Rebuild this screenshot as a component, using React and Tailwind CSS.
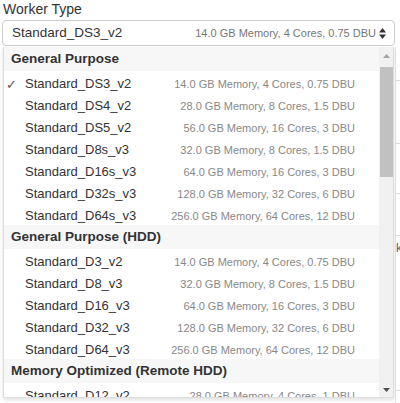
import { Fragment } from 'react'

const groups = [
  {
    name: 'General Purpose',
    items: [
      ['Standard_DS3_v2', '14.0 GB Memory, 4 Cores, 0.75 DBU', true],
      ['Standard_DS4_v2', '28.0 GB Memory, 8 Cores, 1.5 DBU'],
      ['Standard_DS5_v2', '56.0 GB Memory, 16 Cores, 3 DBU'],
      ['Standard_D8s_v3', '32.0 GB Memory, 8 Cores, 1.5 DBU'],
      ['Standard_D16s_v3', '64.0 GB Memory, 16 Cores, 3 DBU'],
      ['Standard_D32s_v3', '128.0 GB Memory, 32 Cores, 6 DBU'],
      ['Standard_D64s_v3', '256.0 GB Memory, 64 Cores, 12 DBU'],
    ],
  },
  {
    name: 'General Purpose (HDD)',
    items: [
      ['Standard_D3_v2', '14.0 GB Memory, 4 Cores, 0.75 DBU'],
      ['Standard_D8_v3', '32.0 GB Memory, 8 Cores, 1.5 DBU'],
      ['Standard_D16_v3', '64.0 GB Memory, 16 Cores, 3 DBU'],
      ['Standard_D32_v3', '128.0 GB Memory, 32 Cores, 6 DBU'],
      ['Standard_D64_v3', '256.0 GB Memory, 64 Cores, 12 DBU'],
    ],
  },
  {
    name: 'Memory Optimized (Remote HDD)',
    items: [['Standard_D12_v2', '28.0 GB Memory, 4 Cores, 1 DBU']],
  },
]

function SortIcon() {
  return (
    <svg width="7" height="11" viewBox="0 0 7 11" className="ml-[3px]">
      <path d="M3.5 0 L7 4.5 L0 4.5 Z" fill="#333" />
      <path d="M3.5 11 L7 6.5 L0 6.5 Z" fill="#333" />
    </svg>
  )
}

export default function App() {
  return (
    <div className="relative w-[400px] h-[403px] overflow-hidden bg-white font-['Liberation_Sans',Arial,sans-serif] text-[#333]">
      {/* page content peeking out behind the dropdown */}
      <div className="absolute left-[395px] top-[47px] w-[5px] h-[356px] border-l border-[#e6e6e6]" />
      <div className="absolute left-[395px] top-[80px] w-[5px] border-t border-[#ddd]" />
      <div className="absolute left-[395px] top-[143px] w-[5px] border-t border-[#ddd]" />
      <div className="absolute left-[395px] top-[193px] w-[5px] border-t border-[#ddd]" />
      <div className="absolute left-[395px] top-[235px] w-[5px] border-t border-[#ddd]" />
      <div className="absolute left-[395px] top-[390px] w-[5px] border-t border-[#ddd]" />
      <div className="absolute left-[396px] top-[242px] text-[12px] leading-none text-[#666]">k</div>

      <div className="px-[3px] pt-[1px]">
        <div className="text-[14px] leading-[17px] text-[#333]">Worker Type</div>
        <div className="mt-[2px] h-[26px] w-[393px] -ml-[1px] rounded-[4px] border border-[#ccc] flex items-center pl-[9px] pr-[8px]">
          <span className="text-[13.5px] text-[#333]">Standard_DS3_v2</span>
          <span className="ml-auto text-[11px] text-[#777]">14.0 GB Memory, 4 Cores, 0.75 DBU</span>
          <SortIcon />
        </div>
      </div>

      <div className="absolute left-[3px] top-[47px] w-[391px] h-[351px] flex bg-white border border-[#ddd] border-t-0 shadow-[0_2px_4px_rgba(0,0,0,0.12)] overflow-hidden">
        <div className="flex-1 overflow-hidden">
          {groups.map((g) => (
            <Fragment key={g.name}>
              <div className="h-[24px] flex items-center pl-[7px] bg-[#f7f7f7] text-[13.5px] font-bold text-[#333] whitespace-nowrap">
                {g.name}
              </div>
              {g.items.map(([name, spec, sel]) => (
                <div key={name} className="h-[22px] flex items-center pt-[4px] pl-[2px] pr-[24px]">
                  <span className="w-[19px] text-[13px] text-[#555] font-['DejaVu_Sans',sans-serif] leading-none">
                    {sel ? '✓' : ''}
                  </span>
                  <span className="text-[13px] text-[#333]">{name}</span>
                  <span className="ml-auto text-[11px] text-[#888]">{spec}</span>
                </div>
              ))}
            </Fragment>
          ))}
        </div>
        <div className="w-[14px] bg-[#f1f1f1] flex flex-col items-center">
          <div className="h-[17px] flex items-center justify-center">
            <svg width="7" height="4" viewBox="0 0 7 4"><path d="M3.5 0 L7 4 L0 4 Z" fill="#a3a3a3" /></svg>
          </div>
          <div className="w-[13px] h-[110px] bg-[#c1c1c1] mt-[3px]" />
          <div className="mt-auto h-[14px] flex items-center justify-center">
            <svg width="7" height="4" viewBox="0 0 7 4"><path d="M0 0 L7 0 L3.5 4 Z" fill="#505050" /></svg>
          </div>
        </div>
      </div>
    </div>
  )
}
